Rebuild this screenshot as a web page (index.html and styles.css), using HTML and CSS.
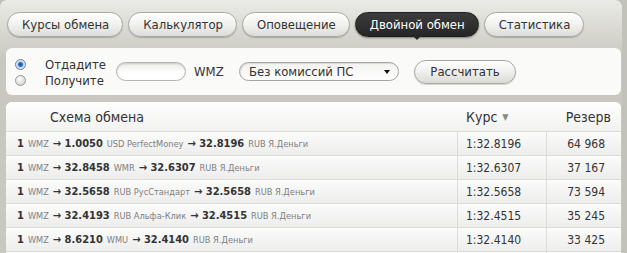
FILE: index.html
```html
<!DOCTYPE html>
<html lang="ru">
<head>
    <meta charset="UTF-8">
    <title>Двойной обмен</title>
    <link rel="stylesheet" href="styles.css">
</head>
<body>
<div class="wrap">
    <nav class="tabs">
        <a class="tab" href="#">Курсы обмена</a>
        <a class="tab" href="#">Калькулятор</a>
        <a class="tab" href="#">Оповещение</a>
        <a class="tab active" href="#">Двойной обмен</a>
        <a class="tab" href="#">Статистика</a>
    </nav>

    <form class="calc">
        <div class="modes">
            <label class="mode"><input type="radio" name="mode" checked><span>Отдадите</span></label>
            <label class="mode"><input type="radio" name="mode"><span>Получите</span></label>
        </div>
        <input class="amount" type="text">
        <span class="cur">WMZ</span>
        <div class="select">Без комиссий ПС<span class="caret"></span></div>
        <button class="btn" type="button">Рассчитать</button>
    </form>

    <div class="rates">
        <div class="row head">
            <div class="c scheme">Схема обмена</div>
            <div class="c rate">Курс <span class="sort">&#9660;</span></div>
            <div class="c reserve">Резерв</div>
        </div>
        <div class="row">
            <div class="c scheme"><b>1</b> <i>WMZ</i> <b>&rarr; 1.0050</b> <i>USD PerfectMoney</i> <b>&rarr; 32.8196</b> <i>RUB Я.Деньги</i></div>
            <div class="c rate">1:32.8196</div>
            <div class="c reserve">64 968</div>
        </div>
        <div class="row">
            <div class="c scheme"><b>1</b> <i>WMZ</i> <b>&rarr; 32.8458</b> <i>WMR</i> <b>&rarr; 32.6307</b> <i>RUB Я.Деньги</i></div>
            <div class="c rate">1:32.6307</div>
            <div class="c reserve">37 167</div>
        </div>
        <div class="row">
            <div class="c scheme"><b>1</b> <i>WMZ</i> <b>&rarr; 32.5658</b> <i>RUB РусСтандарт</i> <b>&rarr; 32.5658</b> <i>RUB Я.Деньги</i></div>
            <div class="c rate">1:32.5658</div>
            <div class="c reserve">73 594</div>
        </div>
        <div class="row">
            <div class="c scheme"><b>1</b> <i>WMZ</i> <b>&rarr; 32.4193</b> <i>RUB Альфа-Клик</i> <b>&rarr; 32.4515</b> <i>RUB Я.Деньги</i></div>
            <div class="c rate">1:32.4515</div>
            <div class="c reserve">35 245</div>
        </div>
        <div class="row">
            <div class="c scheme"><b>1</b> <i>WMZ</i> <b>&rarr; 8.6210</b> <i>WMU</i> <b>&rarr; 32.4140</b> <i>RUB Я.Деньги</i></div>
            <div class="c rate">1:32.4140</div>
            <div class="c reserve">33 425</div>
        </div>
        <div class="row">
            <div class="c scheme"></div>
            <div class="c rate"></div>
            <div class="c reserve"></div>
        </div>
    </div>
</div>
</body>
</html>
```

FILE: styles.css
```css
body {
    margin: 0;
    background: #c3c2ba;
    font-family: "DejaVu Sans Condensed", "DejaVu Sans", sans-serif;
    font-size: 13px;
    color: #333;
    overflow: hidden;
}
.wrap {
    width: 616px;
    height: 253px;
    padding: 12px 0 0 6px;
    border-radius: 7px 7px 0 0;
    background: linear-gradient(#ebebe7, #d3d2cb 40px, #c8c7c0 60px, #c8c7c0);
    overflow: hidden;
}

/* tabs */
.tabs {
    display: flex;
    gap: 5px;
    padding-left: 1px;
}
.tab {
    position: relative;
    height: 23px;
    line-height: 23px;
    padding: 0 13px 0 14px;
    border: 1px solid #a9a9a3;
    border-radius: 13px;
    background: linear-gradient(#ffffff, #f1f1ef 50%, #dcdcd8);
    box-shadow: 0 1px 1px rgba(0, 0, 0, 0.2), inset 0 1px 0 #fff;
    color: #333;
    text-decoration: none;
    white-space: nowrap;
}
.tab.active {
    background: linear-gradient(#3c3c3c, #262626);
    border-color: #1e1e1e;
    color: #fff;
    box-shadow: 0 1px 2px rgba(0, 0, 0, 0.4);
}
.tab.active::after {
    content: "";
    position: absolute;
    left: 50%;
    bottom: -4px;
    margin-left: -4px;
    border-left: 4px solid transparent;
    border-right: 4px solid transparent;
    border-top: 4px solid #262626;
}

/* form */
.calc {
    display: flex;
    align-items: center;
    width: 615px;
    height: 47px;
    margin: 11px 0 0;
    box-sizing: border-box;
    padding-left: 9px;
    background: #fafaf9;
    border-radius: 6px;
}
.modes {
    display: flex;
    flex-direction: column;
    width: 101px;
    padding-top: 2px;
}
.mode {
    display: flex;
    align-items: center;
    height: 16px;
}
.mode input {
    appearance: none;
    width: 11px;
    height: 11px;
    margin: 0 19px 0 0;
    border: 1px solid #9a9a9a;
    border-radius: 50%;
    background: radial-gradient(circle at 40% 35%, #ffffff, #c8c8c8);
}
.mode input:checked {
    border-color: #6a7f99;
    background: radial-gradient(circle, #1c57a8 0, #2f6fc4 2px, #c4d3e6 3px, #eef2f7 5px);
}
.amount {
    width: 70px;
    height: 19px;
    box-sizing: border-box;
    border: 1px solid #b5b5b0;
    border-radius: 10px;
    background: linear-gradient(#ececea, #ffffff 60%);
    box-shadow: inset 0 1px 2px rgba(0, 0, 0, 0.15);
    padding: 0 8px;
}
.cur {
    margin-left: 8px;
    width: 45px;
}
.select {
    position: relative;
    width: 160px;
    height: 19px;
    line-height: 17px;
    box-sizing: border-box;
    padding-left: 9px;
    border: 1px solid #a5a5a0;
    border-radius: 10px;
    background: linear-gradient(#f2f2f0, #ffffff);
    box-shadow: inset 1px 1px 1px rgba(0, 0, 0, 0.1);
}
.caret {
    position: absolute;
    right: 8px;
    top: 7px;
    border-left: 3px solid transparent;
    border-right: 3px solid transparent;
    border-top: 4px solid #111;
}
.btn {
    margin-left: 15px;
    width: 102px;
    height: 24px;
    font: inherit;
    color: #333;
    border: 1px solid #a7a7a2;
    border-radius: 12px;
    background: linear-gradient(#ffffff, #efefed 50%, #dadad6);
    box-shadow: 0 1px 1px rgba(0, 0, 0, 0.15);
}

/* table */
.rates {
    width: 615px;
    margin-top: 7px;
    background: #fff;
    border-radius: 6px 6px 0 0;
    overflow: hidden;
}
.row {
    display: flex;
    height: 23px;
    border-bottom: 1px solid #dcdcd9;
    background: linear-gradient(#fbfbfb, #ededec);
}
.row.head {
    height: 29px;
    background: linear-gradient(#ffffff, #f1f1ef);
    font-size: 14px;
}
.c {
    display: flex;
    align-items: center;
    box-sizing: border-box;
    white-space: nowrap;
}
.scheme {
    width: 451px;
    padding-left: 11px;
    font-size: 11px;
}
.rate {
    width: 89px;
    padding-left: 8px;
    border-left: 1px solid #dcdcd9;
    font-size: 12px;
}
.reserve {
    width: 75px;
    justify-content: flex-end;
    padding-right: 16px;
    border-left: 1px solid #dcdcd9;
    font-size: 12px;
}
.head .c {
    border-left: 0;
    font-size: 14px;
}
.head .scheme {
    padding-left: 44px;
}
.head .rate {
    padding-left: 9px;
}
.head .reserve {
    padding-right: 10px;
}
.sort {
    margin-left: 5px;
    font-size: 9px;
    color: #888;
}
.scheme b {
    font-weight: bold;
    margin: 0 1px;
}
.scheme b:first-child {
    margin-left: 0;
}
.scheme i {
    font-style: normal;
    font-size: 9.2px;
    color: #7f7f7f;
    margin: 0 1px;
}
.scheme b + i, .scheme i + b {
    margin-left: 3px;
}
```
